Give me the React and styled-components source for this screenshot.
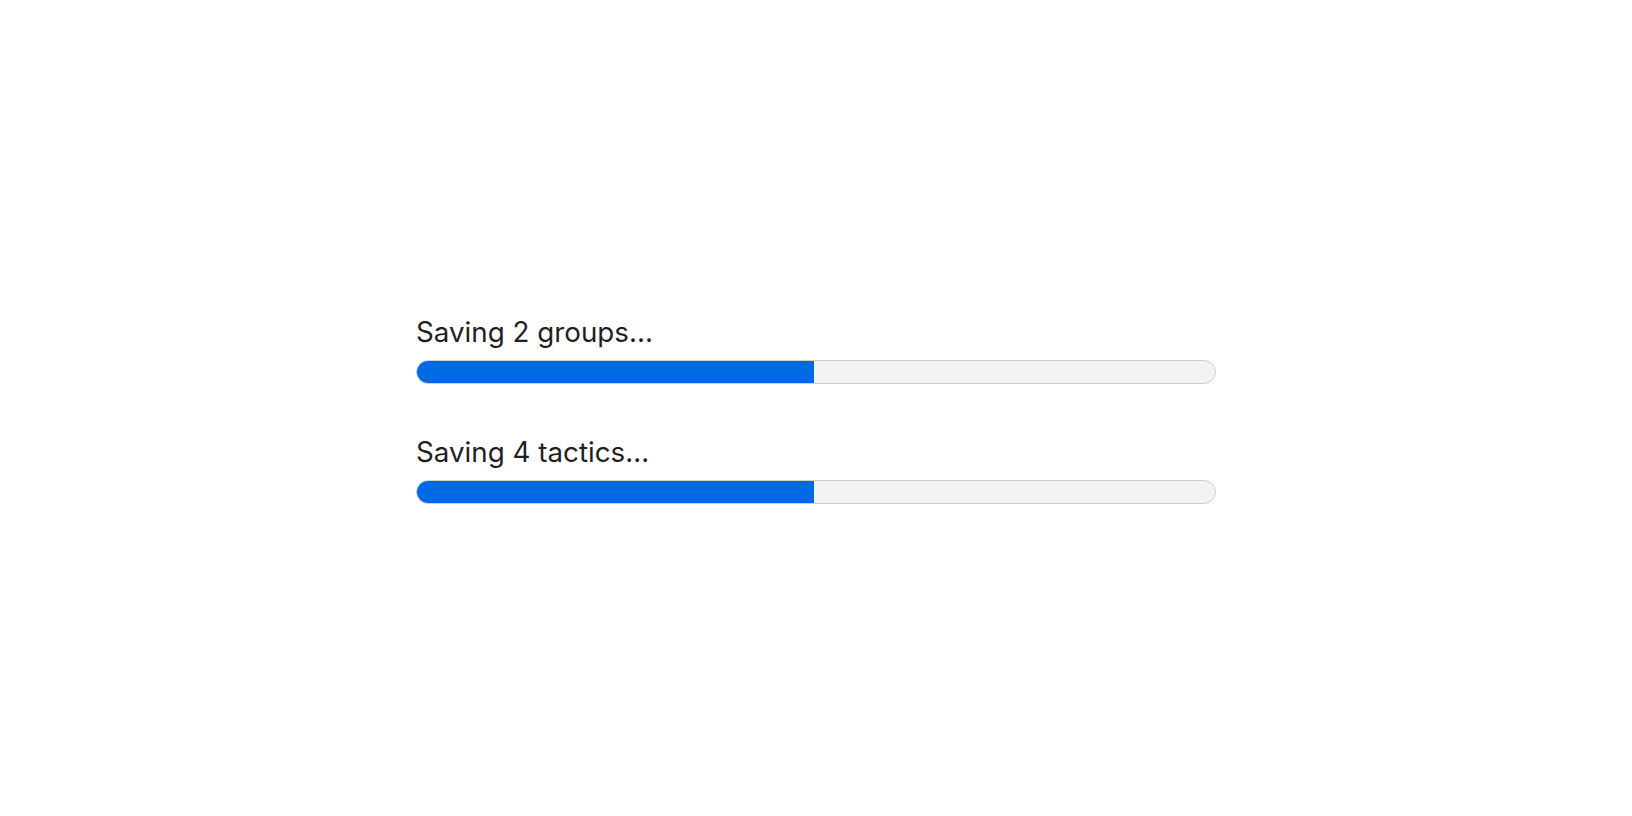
import React from 'react';
import styled, { createGlobalStyle } from 'styled-components';

const GlobalStyle = createGlobalStyle`
    html, body {
        margin: 0;
        padding: 0;
        background: #ffffff;
    }
    body {
        font-family: 'Inter', 'Liberation Sans', sans-serif;
        color: #1f1f1f;
    }
`

const Page = styled.div`
    min-height: 100vh;
    display: flex;
    align-items: center;
    justify-content: center;
`

const List = styled.div`
    width: 800px;
    display: flex;
    flex-direction: column;
    gap: 48px;
`

const Item = styled.div`
    display: flex;
    flex-direction: column;
    gap: 8px;
`

const Label = styled.div`
    font-size: 27.75px;
    line-height: 40px;
    color: #1f1f1f;
`

const Track = styled.div`
    height: 24px;
    box-sizing: border-box;
    border: 1px solid #cfcfcf;
    border-radius: 12px;
    background: #f2f2f2;
    overflow: hidden;
`

const Fill = styled.div`
    height: 100%;
    background: #006ae5;
`

const jobs = [
    { label: 'Saving 2 groups...', progress: 49.75 },
    { label: 'Saving 4 tactics...', progress: 49.75 },
];

export default function App()
{
    return (
        <>
            <GlobalStyle />
            <Page>
                <List>
                    {jobs.map(job => (
                        <Item key={job.label}>
                            <Label>{job.label}</Label>
                            <Track>
                                <Fill style={{ width: `${job.progress}%` }} />
                            </Track>
                        </Item>
                    ))}
                </List>
            </Page>
        </>
    )
}
